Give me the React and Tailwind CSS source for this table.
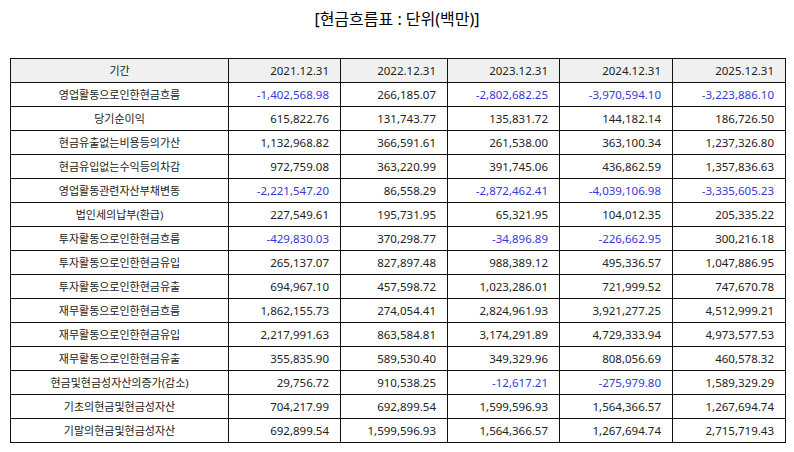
import React from "react";

const headers = ["기간", "2021.12.31", "2022.12.31", "2023.12.31", "2024.12.31", "2025.12.31"];
const rows = [
  ["영업활동으로인한현금흐름", "-1,402,568.98", "266,185.07", "-2,802,682.25", "-3,970,594.10", "-3,223,886.10"],
  ["당기순이익", "615,822.76", "131,743.77", "135,831.72", "144,182.14", "186,726.50"],
  ["현금유출없는비용등의가산", "1,132,968.82", "366,591.61", "261,538.00", "363,100.34", "1,237,326.80"],
  ["현금유입없는수익등의차감", "972,759.08", "363,220.99", "391,745.06", "436,862.59", "1,357,836.63"],
  ["영업활동관련자산부채변동", "-2,221,547.20", "86,558.29", "-2,872,462.41", "-4,039,106.98", "-3,335,605.23"],
  ["법인세의납부(환급)", "227,549.61", "195,731.95", "65,321.95", "104,012.35", "205,335.22"],
  ["투자활동으로인한현금흐름", "-429,830.03", "370,298.77", "-34,896.89", "-226,662.95", "300,216.18"],
  ["투자활동으로인한현금유입", "265,137.07", "827,897.48", "988,389.12", "495,336.57", "1,047,886.95"],
  ["투자활동으로인한현금유출", "694,967.10", "457,598.72", "1,023,286.01", "721,999.52", "747,670.78"],
  ["재무활동으로인한현금흐름", "1,862,155.73", "274,054.41", "2,824,961.93", "3,921,277.25", "4,512,999.21"],
  ["재무활동으로인한현금유입", "2,217,991.63", "863,584.81", "3,174,291.89", "4,729,333.94", "4,973,577.53"],
  ["재무활동으로인한현금유출", "355,835.90", "589,530.40", "349,329.96", "808,056.69", "460,578.32"],
  ["현금및현금성자산의증가(감소)", "29,756.72", "910,538.25", "-12,617.21", "-275,979.80", "1,589,329.29"],
  ["기초의현금및현금성자산", "704,217.99", "692,899.54", "1,599,596.93", "1,564,366.57", "1,267,694.74"],
  ["기말의현금및현금성자산", "692,899.54", "1,599,596.93", "1,564,366.57", "1,267,694.74", "2,715,719.43"],
];
const widths = ["w-[218px]", "w-[112px]", "w-[107px]", "w-[112px]", "w-[113px]", "w-[113px]"];

export default function App() {
  return (
    <div className="w-[794px] h-[452px] bg-white text-[#222] font-['Noto_Sans','Noto_Sans_CJK_KR',sans-serif]">
      <div className="h-[36px] flex items-center justify-center text-[16px] text-black pt-[1px]">
        [현금흐름표 : 단위(백만)]
      </div>
      <div className="pt-[22px] pl-[10px]">
        <table className="border-collapse table-fixed w-[775px]">
          <colgroup>
            {widths.map((w, i) => (
              <col key={i} className={w} />
            ))}
          </colgroup>
          <thead>
            <tr className="h-[24px] bg-[#f0f0f0]">
              {headers.map((h, i) => (
                <th
                  key={i}
                  className={`border border-[#111] font-normal p-0 leading-none ${i === 0 ? "text-center text-[11px]" : "text-right pr-[11px] text-[11.5px]"}`}
                >
                  {h}
                </th>
              ))}
            </tr>
          </thead>
          <tbody>
            {rows.map((r, ri) => (
              <tr key={ri} className="h-[24px]">
                {r.map((c, ci) => (
                  <td
                    key={ci}
                    className={`border border-[#111] p-0 leading-none ${ci === 0 ? "text-center text-[11px]" : "text-right pr-[11px] text-[11.5px]"} ${ci > 0 && c.startsWith("-") ? "text-[#3838d8]" : ""}`}
                  >
                    {c}
                  </td>
                ))}
              </tr>
            ))}
          </tbody>
        </table>
      </div>
    </div>
  );
}
